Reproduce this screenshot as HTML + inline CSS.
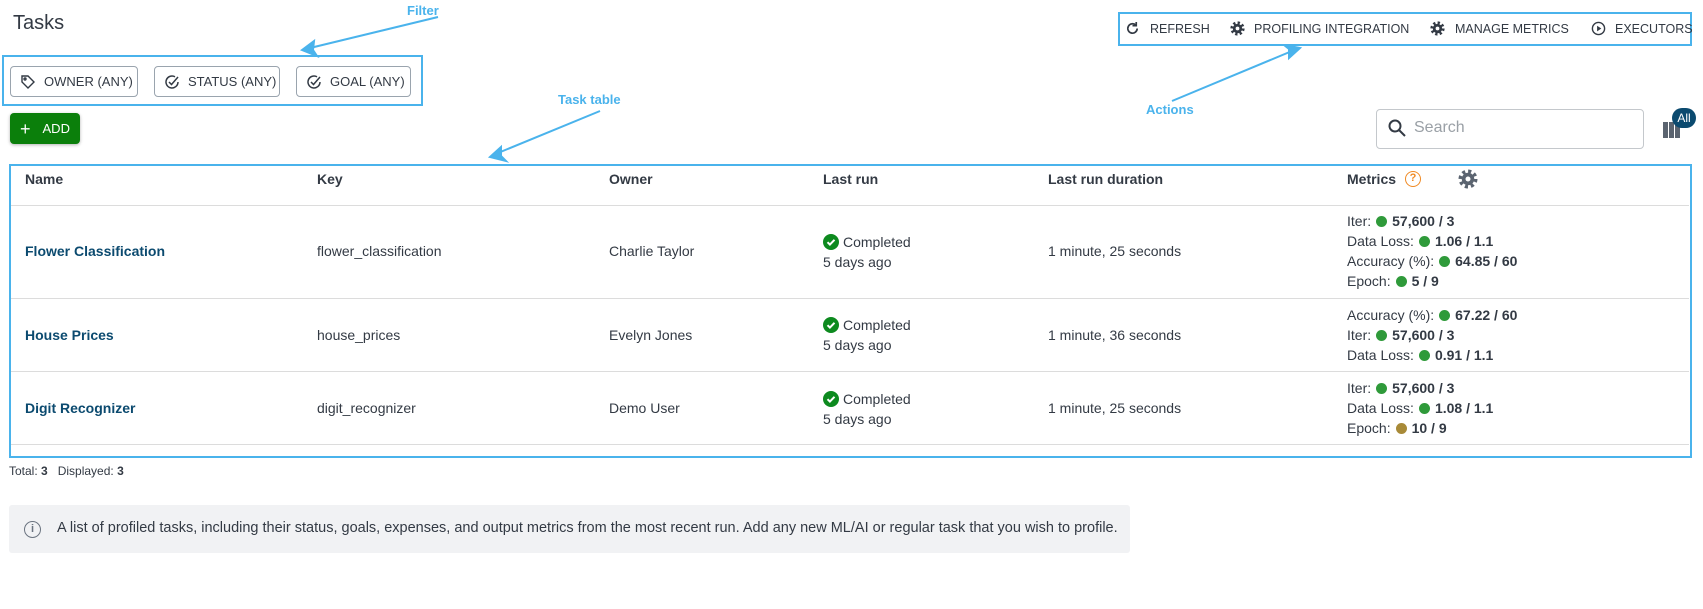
<!DOCTYPE html>
<html><head><meta charset="utf-8"><style>
*{box-sizing:border-box;margin:0;padding:0}
body{width:1703px;height:609px;background:#fff;font-family:"Liberation Sans",sans-serif;color:#333a44;position:relative;overflow:hidden;font-size:14px}
.a{position:absolute;white-space:nowrap}
.ann{position:absolute;border:2px solid #4ab3ec}
.lbl{color:#4ab3ec;font-weight:bold;font-size:13px}
.btn{position:absolute;border:1px solid #9aa4ae;border-radius:4px;height:31px;display:flex;align-items:center;padding-left:9px;font-size:13px;color:#333a44}
.btn svg{margin-right:8px}
.at{position:absolute;top:22px;font-size:12.5px;line-height:14px;color:#333a44;white-space:nowrap}
.ai{position:absolute;top:21px}
.hd{font-weight:bold;font-size:14px}
.nm{font-weight:bold;color:#0b4a6f;font-size:14px}
.hr{position:absolute;left:11px;width:1678px;height:1px;background:#dcdcdc}
.m{line-height:20px;font-size:14px}
.d{display:inline-block;width:11px;height:11px;border-radius:50%;background:#2f9a3a;vertical-align:-1px;margin:0 5px 0 5px}
.m b{color:#333a44}
.ok{display:inline-block;width:16px;height:16px;border-radius:50%;background:#0d8a1f;vertical-align:-3px;margin-right:4px;position:relative}
</style></head><body>
<div class="a" style="left:13px;top:12px;font-size:20px;color:#333a44">Tasks</div>

<div class="ann" style="left:2px;top:55px;width:421px;height:51px"></div>
<div class="btn" style="left:10px;top:66px;width:128px"><svg width="16" height="16" viewBox="0 0 16 16" fill="none" stroke="#333a44" stroke-width="1.4"><path d="M2 2h6l6 6-6 6-6-6z"/><circle cx="5" cy="5" r="1"/></svg>OWNER (ANY)</div>
<div class="btn" style="left:154px;top:66px;width:126px"><svg width="16" height="16" viewBox="0 0 16 16" fill="none" stroke="#333a44" stroke-width="1.5"><path d="M14 8a6 6 0 1 1-3-5.2"/><path d="M5 8l2.5 2.5L14 3"/></svg>STATUS (ANY)</div>
<div class="btn" style="left:296px;top:66px;width:115px"><svg width="16" height="16" viewBox="0 0 16 16" fill="none" stroke="#333a44" stroke-width="1.5"><path d="M14 8a6 6 0 1 1-3-5.2"/><path d="M5 8l2.5 2.5L14 3"/></svg>GOAL (ANY)</div>

<div class="a" style="left:10px;top:113px;width:70px;height:31px;background:#0b7f0b;border-radius:4px;color:#fff;font-size:13px;display:flex;align-items:center;padding-left:10px;box-shadow:0 1px 3px rgba(0,0,0,.3)"><span style="font-size:18px;margin-right:12px;line-height:1">+</span>ADD</div>

<div class="ann" style="left:1118px;top:12px;width:574px;height:34px"></div>
<svg class="ai" style="left:1125px" width="15" height="15" viewBox="0 0 16 16" fill="none" stroke="#333a44" stroke-width="1.8"><path d="M13 8a5 5 0 1 1-1.5-3.6"/><path d="M12 1v4H8"/></svg>
<div class="at" style="left:1150px">REFRESH</div>
<svg class="ai" style="left:1230px" width="15" height="15" viewBox="0 0 16 16"><circle cx="8" cy="8" r="6" fill="none" stroke="#333a44" stroke-width="3.2" stroke-dasharray="2.4 2.3"/><circle cx="8" cy="8" r="5" fill="#333a44"/><circle cx="8" cy="8" r="2" fill="#fff"/></svg>
<div class="at" style="left:1254px">PROFILING INTEGRATION</div>
<svg class="ai" style="left:1430px" width="15" height="15" viewBox="0 0 16 16"><circle cx="8" cy="8" r="6" fill="none" stroke="#333a44" stroke-width="3.2" stroke-dasharray="2.4 2.3"/><circle cx="8" cy="8" r="5" fill="#333a44"/><circle cx="8" cy="8" r="2" fill="#fff"/></svg>
<div class="at" style="left:1455px">MANAGE METRICS</div>
<svg class="ai" style="left:1591px" width="15" height="15" viewBox="0 0 16 16"><circle cx="8" cy="8" r="6.5" fill="none" stroke="#333a44" stroke-width="1.5"/><path d="M6.5 5v6l4.5-3z" fill="#333a44"/></svg>
<div class="at" style="left:1615px">EXECUTORS</div>

<div class="a" style="left:1376px;top:109px;width:268px;height:40px;border:1px solid #c4c8cc;border-radius:4px"></div>
<svg class="a" style="left:1387px;top:118px" width="20" height="20" viewBox="0 0 20 20" fill="none" stroke="#333a44" stroke-width="2"><circle cx="8" cy="8" r="5.5"/><path d="M12 12l6 6"/></svg>
<div class="a" style="left:1414px;top:119px;font-size:16px;color:#9aa0a6">Search</div>
<div class="a" style="left:1663px;top:122px;width:5px;height:16px;background:#5b6470"></div>
<div class="a" style="left:1669px;top:122px;width:5px;height:16px;background:#5b6470"></div>
<div class="a" style="left:1675px;top:122px;width:5px;height:16px;background:#5b6470"></div>
<div class="a" style="left:1672px;top:108px;width:24px;height:20px;border-radius:10px;background:#0b4a6f;color:#fff;font-size:12px;text-align:center;line-height:20px">All</div>

<div class="ann" style="left:9px;top:164px;width:1683px;height:294px"></div>
<div class="a hd" style="left:25px;top:171px">Name</div>
<div class="a hd" style="left:317px;top:171px">Key</div>
<div class="a hd" style="left:609px;top:171px">Owner</div>
<div class="a hd" style="left:823px;top:171px">Last run</div>
<div class="a hd" style="left:1048px;top:171px">Last run duration</div>
<div class="a hd" style="left:1347px;top:171px">Metrics</div>
<div class="a" style="left:1405px;top:171px;width:16px;height:16px;border:1.5px solid #f08a24;border-radius:50%;color:#f08a24;font-size:11px;text-align:center;line-height:13px;font-weight:bold">?</div>
<svg class="a" style="left:1458px;top:169px" width="20" height="20" viewBox="0 0 16 16"><circle cx="8" cy="8" r="6" fill="none" stroke="#5b6470" stroke-width="3.2" stroke-dasharray="2.4 2.3"/><circle cx="8" cy="8" r="5" fill="#5b6470"/><circle cx="8" cy="8" r="2" fill="#fff"/></svg>
<div class="hr" style="top:205px"></div>
<div class="hr" style="top:298px"></div>
<div class="hr" style="top:371px"></div>
<div class="hr" style="top:444px"></div>

<div class="a nm" style="left:25px;top:243px">Flower Classification</div>
<div class="a" style="left:317px;top:243px">flower_classification</div>
<div class="a" style="left:609px;top:243px">Charlie Taylor</div>
<div class="a" style="left:823px;top:232px;line-height:20px"><span class="ok"><svg width="16" height="16" viewBox="0 0 16 16" style="position:absolute;left:0;top:0"><path d="M4.5 8.2l2.4 2.4 4.6-4.8" stroke="#fff" stroke-width="2" fill="none"/></svg></span>Completed<br>5 days ago</div>
<div class="a" style="left:1048px;top:243px">1 minute, 25 seconds</div>
<div class="a m" style="left:1347px;top:211px">Iter:<span class="d"></span><b>57,600 / 3</b><br>Data Loss:<span class="d"></span><b>1.06 / 1.1</b><br>Accuracy (%):<span class="d"></span><b>64.85 / 60</b><br>Epoch:<span class="d"></span><b>5 / 9</b></div>

<div class="a nm" style="left:25px;top:327px">House Prices</div>
<div class="a" style="left:317px;top:327px">house_prices</div>
<div class="a" style="left:609px;top:327px">Evelyn Jones</div>
<div class="a" style="left:823px;top:315px;line-height:20px"><span class="ok"><svg width="16" height="16" viewBox="0 0 16 16" style="position:absolute;left:0;top:0"><path d="M4.5 8.2l2.4 2.4 4.6-4.8" stroke="#fff" stroke-width="2" fill="none"/></svg></span>Completed<br>5 days ago</div>
<div class="a" style="left:1048px;top:327px">1 minute, 36 seconds</div>
<div class="a m" style="left:1347px;top:305px">Accuracy (%):<span class="d"></span><b>67.22 / 60</b><br>Iter:<span class="d"></span><b>57,600 / 3</b><br>Data Loss:<span class="d"></span><b>0.91 / 1.1</b></div>

<div class="a nm" style="left:25px;top:400px">Digit Recognizer</div>
<div class="a" style="left:317px;top:400px">digit_recognizer</div>
<div class="a" style="left:609px;top:400px">Demo User</div>
<div class="a" style="left:823px;top:389px;line-height:20px"><span class="ok"><svg width="16" height="16" viewBox="0 0 16 16" style="position:absolute;left:0;top:0"><path d="M4.5 8.2l2.4 2.4 4.6-4.8" stroke="#fff" stroke-width="2" fill="none"/></svg></span>Completed<br>5 days ago</div>
<div class="a" style="left:1048px;top:400px">1 minute, 25 seconds</div>
<div class="a m" style="left:1347px;top:378px">Iter:<span class="d"></span><b>57,600 / 3</b><br>Data Loss:<span class="d"></span><b>1.08 / 1.1</b><br>Epoch:<span class="d" style="background:#a88a38"></span><b>10 / 9</b></div>

<div class="a" style="left:9px;top:464px;font-size:12px">Total: <b>3</b> &nbsp; Displayed: <b>3</b></div>

<div class="a" style="left:9px;top:505px;width:1121px;height:48px;background:#f1f2f4;border-radius:3px"></div>
<div class="a" style="left:24px;top:521px;width:17px;height:17px;border:1.5px solid #6b7480;border-radius:50%;color:#6b7480;font-size:11px;text-align:center;line-height:14px;font-weight:bold">i</div>
<div class="a" style="left:57px;top:520px;font-size:14.5px">A list of profiled tasks, including their status, goals, expenses, and output metrics from the most recent run. Add any new ML/AI or regular task that you wish to profile.</div>

<div class="a lbl" style="left:407px;top:3px">Filter</div>
<div class="a lbl" style="left:558px;top:92px">Task table</div>
<div class="a lbl" style="left:1146px;top:102px">Actions</div>
<svg class="a" style="left:0;top:0" width="1703" height="609" fill="none" stroke="#4ab3ec" stroke-width="2">
<path d="M438 17L310 48"/><path d="M302 50l12-9-1 9 4 6z" fill="#4ab3ec"/>
<path d="M600 111L498 153"/><path d="M490 157l11-10 0 9 5 5z" fill="#4ab3ec"/>
<path d="M1172 101L1292 51"/><path d="M1300 48l-11 10 0-9-5-4z" fill="#4ab3ec"/>
</svg>
</body></html>
